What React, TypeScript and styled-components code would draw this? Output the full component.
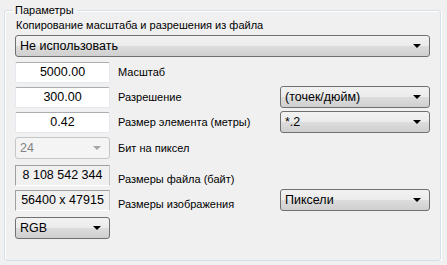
import styled, { createGlobalStyle } from 'styled-components';

const GlobalStyle = createGlobalStyle`
  html, body {
    margin: 0;
    padding: 0;
    background: #f0f0f0;
  }
  body {
    font-family: 'Liberation Sans', Arial, sans-serif;
    color: #000;
  }
`;

const Group = styled.fieldset`
  box-sizing: border-box;
  width: 437px;
  height: 257px;
  margin: 4px 0 0 4px;
  padding: 1px 10px 0 10px;
  border: 1px solid #d5dfe5;
  border-radius: 3px;
  box-shadow: inset 1px 1px 0 #fff, 1px 1px 0 #fff;
`;

const Legend = styled.legend`
  margin-left: -3px;
  padding: 0 3px;
  font-size: 11px;
  line-height: 13px;
`;

const Caption = styled.div`
  font-size: 11px;
  line-height: 14px;
  height: 14px;
  padding-left: 1px;
`;

const Row = styled.div<{ $top: number }>`
  display: grid;
  grid-template-columns: 95px 1fr 150px;
  align-items: center;
  height: 22px;
  margin-top: ${({ $top }) => $top}px;
`;

// labels beside the read-only fields sit a little below the field centre
const Label = styled.span<{ $low?: boolean }>`
  padding-left: 8px;
  padding-top: ${({ $low }) => ($low ? 8 : 0)}px;
  font-size: 11px;
  line-height: 14px;
`;

const Edit = styled.div`
  box-sizing: border-box;
  height: 21px;
  background: #fff;
  border: 1px solid #e3e9ef;
  border-top-color: #abadb3;
  border-radius: 2px;
  font-size: 12.5px;
  line-height: 19px;
  text-align: center;
`;

const Static = styled.div`
  box-sizing: border-box;
  height: 21px;
  border: 1px solid #a0a0a0;
  border-right-color: #c8c8c8;
  border-bottom-color: #fff;
  font-size: 12.5px;
  line-height: 19px;
  text-align: center;
`;

const Combo = styled.div<{ $disabled?: boolean; $top?: number }>`
  box-sizing: border-box;
  height: 22px;
  display: flex;
  align-items: center;
  justify-content: space-between;
  margin-top: ${({ $top }) => $top ?? 0}px;
  padding: 0 8px 0 4px;
  border: 1px solid ${({ $disabled }) => ($disabled ? '#c4c6c8' : '#707070')};
  border-radius: 3px;
  background: ${({ $disabled }) =>
    $disabled
      ? '#f4f4f4'
      : 'linear-gradient(#f2f2f2 0%, #ebebeb 50%, #dddddd 50%, #cfcfcf 100%)'};
  color: ${({ $disabled }) => ($disabled ? '#838383' : '#000')};
  font-size: 12.5px;
  line-height: 20px;
  white-space: nowrap;
`;

const Arrow = styled.span<{ $disabled?: boolean }>`
  width: 0;
  height: 0;
  border-left: 4px solid transparent;
  border-right: 4px solid transparent;
  border-top: 4px solid ${({ $disabled }) => ($disabled ? '#a6a6a6' : '#000')};
`;

const DropDown = ({
  text,
  disabled,
  top,
}: {
  text: string;
  disabled?: boolean;
  top?: number;
}) => (
  <Combo $disabled={disabled} $top={top}>
    <span>{text}</span>
    <Arrow $disabled={disabled} />
  </Combo>
);

export default function App() {
  return (
    <>
      <GlobalStyle />
      <Group>
        <Legend>Параметры</Legend>
        <Caption>Копирование масштаба и разрешения из файла</Caption>
        <DropDown text="Не использовать" top={3} />
        <Row $top={4}>
          <Edit>5000.00</Edit>
          <Label>Масштаб</Label>
        </Row>
        <Row $top={3}>
          <Edit>300.00</Edit>
          <Label>Разрешение</Label>
          <DropDown text="(точек/дюйм)" />
        </Row>
        <Row $top={3}>
          <Edit>0.42</Edit>
          <Label>Размер элемента (метры)</Label>
          <DropDown text="*.2" />
        </Row>
        <Row $top={4}>
          <DropDown text="24" disabled />
          <Label>Бит на пиксел</Label>
        </Row>
        <Row $top={5}>
          <Static>8 108 542 344</Static>
          <Label $low>Размеры файла (байт)</Label>
        </Row>
        <Row $top={3}>
          <Static>56400 x 47915</Static>
          <Label $low>Размеры изображения</Label>
          <DropDown text="Пиксели" />
        </Row>
        <Row $top={6}>
          <DropDown text="RGB" />
        </Row>
      </Group>
    </>
  );
}
